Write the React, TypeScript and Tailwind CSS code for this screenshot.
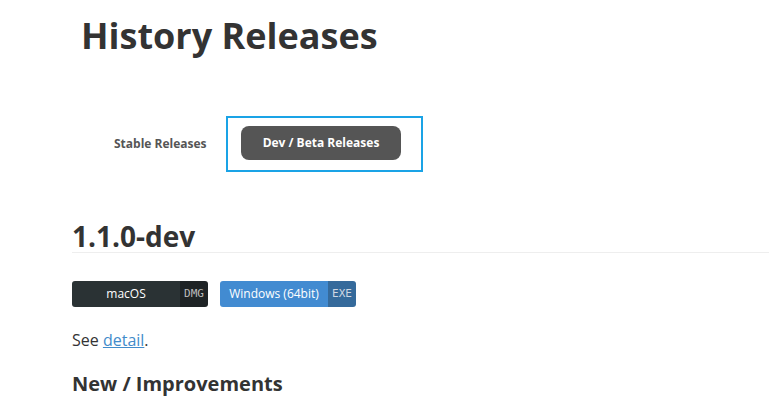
export default function App() {
  return (
    <div
      className="h-[402px] w-[769px] overflow-hidden bg-white pl-[72px] text-[#333]"
      style={{ fontFamily: '"Open Sans", sans-serif' }}
    >
      {/* page title */}
      <h1 className="ml-[9px] pt-[12px] text-[36px] font-bold leading-[48px] text-[#333]">
        History Releases
      </h1>

      {/* tabs */}
      <div className="mt-[56px] flex items-center">
        <div className="ml-[42px] w-[112px] text-[12px] font-bold text-[#555]">
          Stable Releases
        </div>
        <div className="flex h-[56px] w-[197px] items-start border-2 border-[#1aa3e6] pl-[13px] pt-[8px]">
          <div className="flex h-[34px] w-[160px] items-center justify-center rounded-[8px] bg-[#555] text-[12px] font-bold text-white">
            Dev / Beta Releases
          </div>
        </div>
      </div>

      {/* release */}
      <h2 className="mt-[48px] border-b border-[#eee] text-[28px] font-bold leading-[32px] text-[#333]">
        1.1.0-dev
      </h2>

      <div className="mt-[28px] flex gap-[12px]">
        <div className="flex h-[26px] overflow-hidden rounded-[3px] text-[12px]">
          <span className="flex w-[108px] items-center justify-center bg-[#2a3234] text-white">
            macOS
          </span>
          <span className="flex w-[28px] items-center justify-center bg-[#1e2325] font-['DejaVu_Sans_Mono',monospace] text-[11px] text-[#bbb]">
            DMG
          </span>
        </div>
        <div className="flex h-[26px] overflow-hidden rounded-[3px] text-[12px]">
          <span className="flex w-[108px] items-center justify-center bg-[#428bd1] text-white">
            Windows (64bit)
          </span>
          <span className="flex w-[28px] items-center justify-center bg-[#356a9b] font-['DejaVu_Sans_Mono',monospace] text-[11px] text-[#cfd8e3]">
            EXE
          </span>
        </div>
      </div>

      <p className="mt-[21px] text-[16px] leading-[24px]">
        See{' '}
        <a href="#" className="text-[#428bca] underline">
          detail
        </a>
        .
      </p>

      <h3 className="mt-[18px] text-[20px] font-bold leading-[28px]">
        New / Improvements
      </h3>
    </div>
  );
}
